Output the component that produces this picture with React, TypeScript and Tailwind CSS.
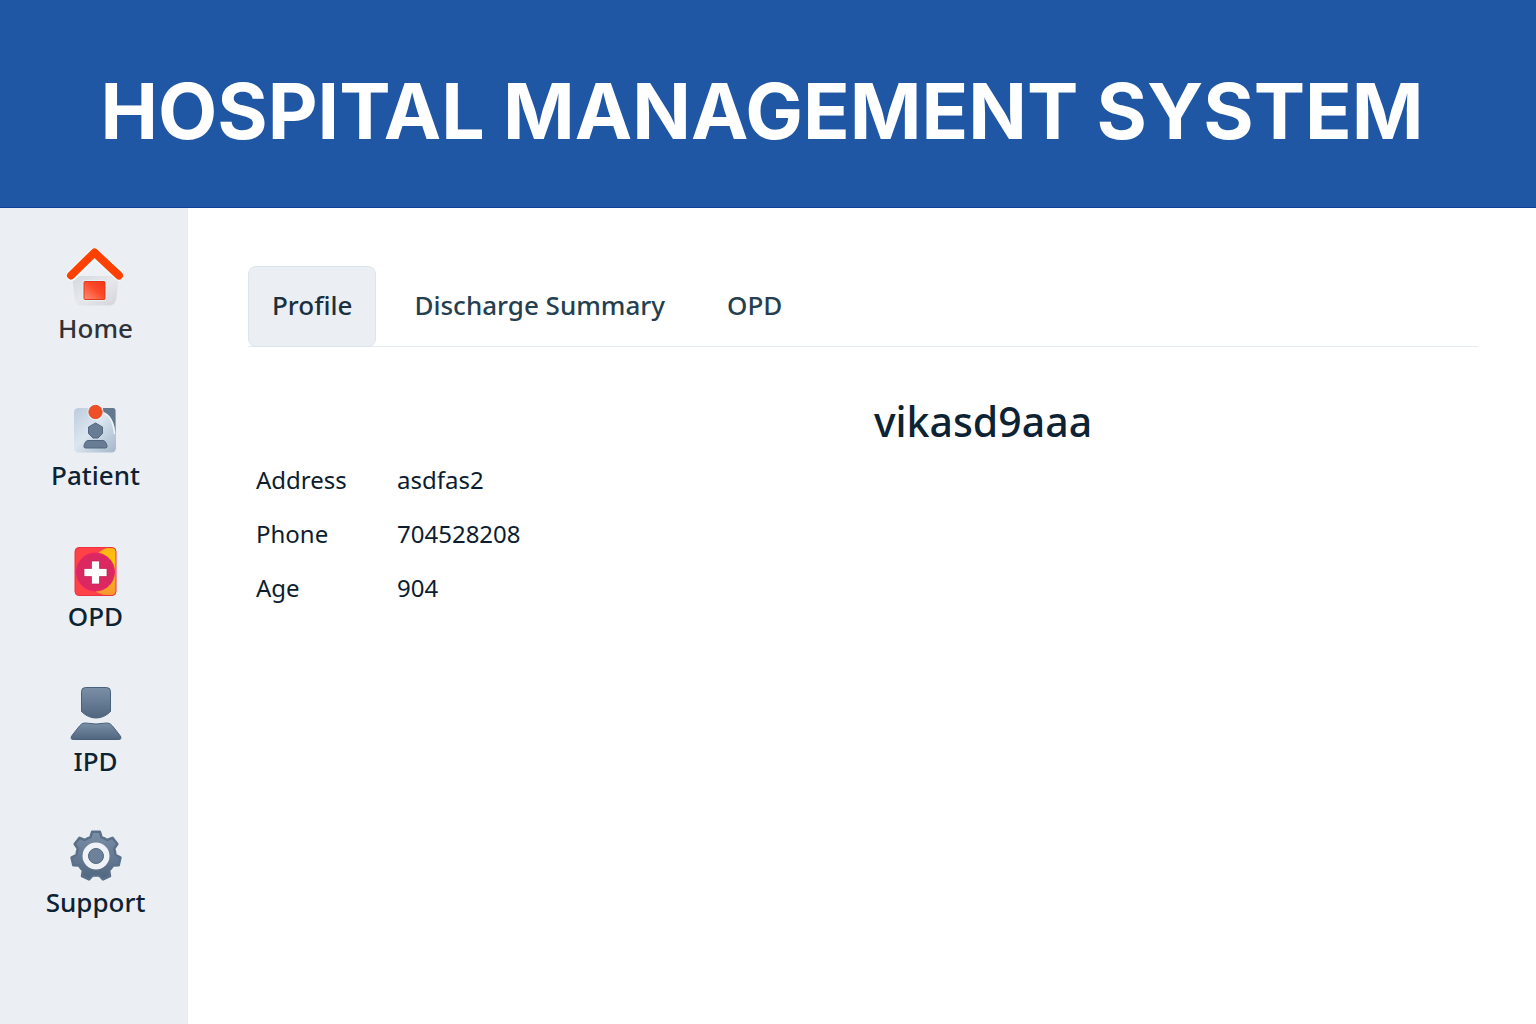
import { useState, type ReactNode } from 'react';

function HomeIcon() {
  return (
    <svg width="60" height="60" viewBox="0 0 60 60" aria-hidden="true">
      <defs>
        <linearGradient id="home-wall" x1="0" y1="0" x2="1" y2="1">
          <stop offset="0" stopColor="#d3d7dc" />
          <stop offset="0.5" stopColor="#e6e8ec" />
          <stop offset="1" stopColor="#d2d4d9" />
        </linearGradient>
        <linearGradient id="home-door" x1="0" y1="1" x2="1" y2="0">
          <stop offset="0" stopColor="#ff9078" />
          <stop offset="0.55" stopColor="#fb4a2a" />
          <stop offset="1" stopColor="#f03614" />
        </linearGradient>
      </defs>
      <path d="M6 27H53L50.500 50Q49.500 57.500 43 57.500H15.500Q9.500 57.500 8.500 50Z" fill="url(#home-wall)" />
      <path d="M6 28L28.500 6L53 28Z" fill="#edf0f5" />
      <path d="M5.500 27.500L28.500 5L53 27.500" fill="none" stroke="#eefafb" strokeWidth="11" strokeLinejoin="round" strokeLinecap="round" />
      <path d="M5 27.500L28.500 4.500L53 27.500" fill="none" stroke="#ff4000" strokeWidth="8" strokeLinejoin="round" strokeLinecap="round" />
      <rect x="16.500" y="32" width="24" height="21" rx="3" fill="#dff4f5" />
      <rect x="18" y="33.500" width="21" height="18" rx="1" fill="url(#home-door)" stroke="#e5381c" strokeWidth="1" />
    </svg>
  );
}

function PatientIcon() {
  return (
    <svg width="48" height="58" viewBox="0 -1 48 58" aria-hidden="true">
      <defs>
        <linearGradient id="badge" x1="0" y1="0" x2="1" y2="1">
          <stop offset="0" stopColor="#bccbdc" />
          <stop offset="0.45" stopColor="#dbe6f0" />
          <stop offset="1" stopColor="#a3b6ca" />
        </linearGradient>
      </defs>
      <rect x="2" y="10" width="42" height="44.500" rx="4.500" fill="url(#badge)" />
      <path d="M31 10H41Q43.500 10 43.500 12.500V37Q43 19 31 15Z" fill="#63788f" />
      <path d="M31 14.500Q41 18 42.500 36" fill="none" stroke="#edf5fb" strokeWidth="1.500" />
      <path d="M23.500 25L30.500 29V35.500L26 40H21L16.500 35.500V29Z" fill="#687d94" stroke="#50667e" strokeLinejoin="round" />
      <path d="M16 42.500H31Q33 42.500 34 45L35 47.500Q35.500 50 33.500 50H13.500Q11.500 50 12 47.500L13 45Q14 42.500 16 42.500Z" fill="#687d94" stroke="#50667e" />
      <circle cx="23.500" cy="14" r="8" fill="#edf3f8" />
      <circle cx="23.500" cy="14" r="6.700" fill="#ee4f27" stroke="#df431f" strokeWidth="0.800" />
    </svg>
  );
}

function OpdIcon() {
  return (
    <svg width="44" height="52" viewBox="0 -3 44 52" aria-hidden="true">
      <defs>
        <linearGradient id="opd-gold" x1="0" y1="0" x2="0" y2="1">
          <stop offset="0" stopColor="#ffb21c" />
          <stop offset="0.3" stopColor="#ffc800" />
          <stop offset="1" stopColor="#f79632" />
        </linearGradient>
        <clipPath id="opd-card">
          <rect x="1" y="0.500" width="41" height="48" rx="4" />
        </clipPath>
      </defs>
      <g clipPath="url(#opd-card)">
        <rect width="44" height="49" fill="#ff4148" />
        <path d="M24 6Q30 1 37 0H44V49H33L22 45Z" fill="url(#opd-gold)" />
      </g>
      <circle cx="21.500" cy="25" r="19" fill="#db2860" stroke="#ed2369" strokeWidth="1" />
      <rect x="1" y="0.500" width="41" height="48" rx="4" fill="none" stroke="#ef3040" />
      <path d="M17.500 14H25.500V21.500H33V29.500H25.500V37H17.500V29.500H10V21.500H17.500Z" fill="#fff" stroke="#bd1d54" strokeWidth="0.700" />
    </svg>
  );
}

function SlateGradient({ id }: { id: string }) {
  return (
    <linearGradient id={id} x1="0" y1="0" x2="0" y2="1">
      <stop offset="0" stopColor="#7b90a7" />
      <stop offset="1" stopColor="#50667f" />
    </linearGradient>
  );
}

function IpdIcon() {
  return (
    <svg width="52" height="56" viewBox="0 -2 52 56" aria-hidden="true">
      <defs><SlateGradient id="ipd-fill" /></defs>
      <g fill="url(#ipd-fill)" stroke="#486079" strokeWidth="1" strokeLinejoin="round">
        <path d="M15.500 0.500H36.500Q40.500 0.500 40.500 4.500V24.500Q34 31 26 31Q18 31 11.500 24.500V4.500Q11.500 0.500 15.500 0.500Z" />
        <path d="M15.500 36Q26 38 36.500 36Q40 35.500 42.500 39L50 48.500Q52.500 52.500 48.500 52.500H3.500Q-0.500 52.500 2 48.500L9.500 39Q12 35.500 15.500 36Z" />
      </g>
    </svg>
  );
}

const TEETH = 7;

function gearPoint(radius: number, angle: number) {
  return `${(26 + radius * Math.sin(angle)).toFixed(2)} ${(26 - radius * Math.cos(angle)).toFixed(2)}`;
}

const gearPath = `M${Array.from({ length: TEETH }, (_, i) => {
  const a = (i * 2 * Math.PI) / TEETH;
  return [
    gearPoint(19.5, a - 0.29),
    gearPoint(24.5, a - 0.16),
    gearPoint(24.5, a + 0.16),
    gearPoint(19.5, a + 0.29),
    gearPoint(19.5, a + Math.PI / TEETH),
  ].join('L');
}).join('L')}Z`;

function SupportIcon() {
  return (
    <svg width="52" height="52" viewBox="0 0 52 52" aria-hidden="true">
      <defs><SlateGradient id="gear-fill" /></defs>
      <path d={gearPath} fill="url(#gear-fill)" stroke="#5a7089" strokeWidth="2.500" strokeLinejoin="round" />
      <circle cx="26" cy="26" r="13.500" fill="#eff3f7" />
      <circle cx="26" cy="26" r="7.500" fill="#6d829a" stroke="#506781" />
    </svg>
  );
}

const navItems: { label: string; icon: ReactNode; tone: string }[] = [
  { label: 'Home', icon: <HomeIcon />, tone: 'text-[#303238]' },
  { label: 'Patient', icon: <PatientIcon />, tone: 'text-[#0d2233]' },
  { label: 'OPD', icon: <OpdIcon />, tone: 'text-[#0d2233]' },
  { label: 'IPD', icon: <IpdIcon />, tone: 'text-[#0d2233]' },
  { label: 'Support', icon: <SupportIcon />, tone: 'text-[#0d2233]' },
];

const tabs = ['Profile', 'Discharge Summary', 'OPD'];

const details = [
  ['Address', 'asdfas2'],
  ['Phone', '704528208'],
  ['Age', '904'],
];

export default function App() {
  const [active, setActive] = useState('Profile');

  return (
    <div className="flex min-h-screen flex-col bg-white font-['Noto_Sans',sans-serif] text-[#0d2233]">
      <header className="border-b border-[#0f3f98] bg-[#1f57a4] pt-16 pr-9 pb-12 pl-6">
        <h1 className="text-center font-['Inter',sans-serif] text-[77px] leading-[95px] font-bold text-white">
          HOSPITAL MANAGEMENT SYSTEM
        </h1>
      </header>
      <div className="flex flex-1">
        <nav aria-label="Main" className="w-47 shrink-0 border-r border-[#e6ebf0] bg-[#ebeff4] pt-10 pb-10 pl-1">
          <ul className="flex flex-col gap-[51px]">
            {navItems.map((item) => (
              <li key={item.label}>
                <a href="#" className={`flex flex-col items-center gap-0.5 text-[26px] leading-9 font-medium ${item.tone}`}>
                  {item.icon}
                  {item.label}
                </a>
              </li>
            ))}
          </ul>
        </nav>
        <main className="min-w-0 flex-1 pt-[58px] pr-[58px] pl-15">
          <div role="tablist" className="flex gap-3.5 border-b border-[#e6edf2]">
            {tabs.map((tab) => (
              <button
                key={tab}
                type="button"
                role="tab"
                aria-selected={active === tab}
                onClick={() => setActive(tab)}
                className={`-mb-px h-[81px] rounded-lg border px-[23px] pb-0.5 text-[26px] font-medium ${
                  active === tab
                    ? 'border-[#dce5ee] bg-[#ebeff4] text-[#1a3040]'
                    : 'border-transparent text-[#263f50]'
                }`}
              >
                {tab}
              </button>
            ))}
          </div>
          <section role="tabpanel" aria-label={active}>
            <h2 className="mt-11 ml-60 text-center text-[41px] leading-[60px] font-medium">vikasd9aaa</h2>
            <dl className="mt-0.5 ml-2 grid grid-cols-[141px_1fr] text-2xl leading-[54px] text-[#0d1d30]">
              {details.map(([label, value]) => (
                <div key={label} className="contents">
                  <dt>{label}</dt>
                  <dd>{value}</dd>
                </div>
              ))}
            </dl>
          </section>
        </main>
      </div>
    </div>
  );
}
